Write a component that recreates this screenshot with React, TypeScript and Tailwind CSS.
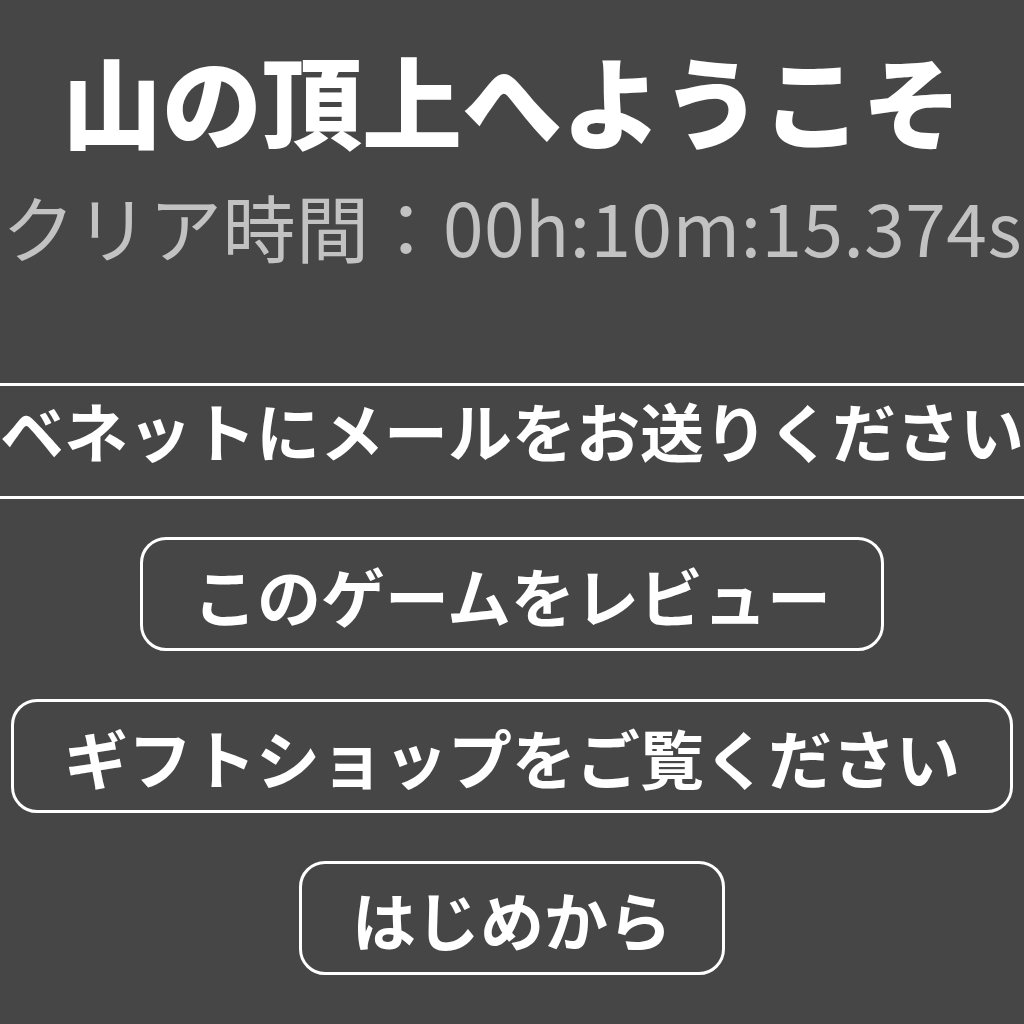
const jp = "font-['Noto_Sans_CJK_JP','Noto_Sans',sans-serif]";

const buttons = ['このゲームをレビュー', 'ギフトショップをご覧ください', 'はじめから'];

export default function App() {
  return (
    <div className={`${jp} flex h-[1024px] w-[1024px] flex-col items-center overflow-hidden bg-[#464646] text-white`}>
      <h1 className="mt-[49px] whitespace-nowrap text-[100px] font-black leading-none">山の頂上へようこそ</h1>
      <p className="mt-[40px] whitespace-nowrap text-[73px] font-normal leading-none tracking-[0.5px] text-[#c2c2c2]">
        クリア時間：00h:10m:15.374s
      </p>

      {/* mail row between two rules */}
      <div className="mt-[121px] flex w-full justify-center border-y-[3px] border-white pt-[11px] pb-[35px]">
        <span className="whitespace-nowrap text-[64px] font-bold leading-none">ベネットにメールをお送りください</span>
      </div>

      <div className="mt-[38px] flex flex-col items-center gap-[48px]">
        {buttons.map((label) => (
          <button
            key={label}
            className="whitespace-nowrap rounded-[26px] border-[3px] border-white px-[50px] py-[22px] text-[64px] font-bold leading-none"
          >
            {label}
          </button>
        ))}
      </div>
    </div>
  );
}
